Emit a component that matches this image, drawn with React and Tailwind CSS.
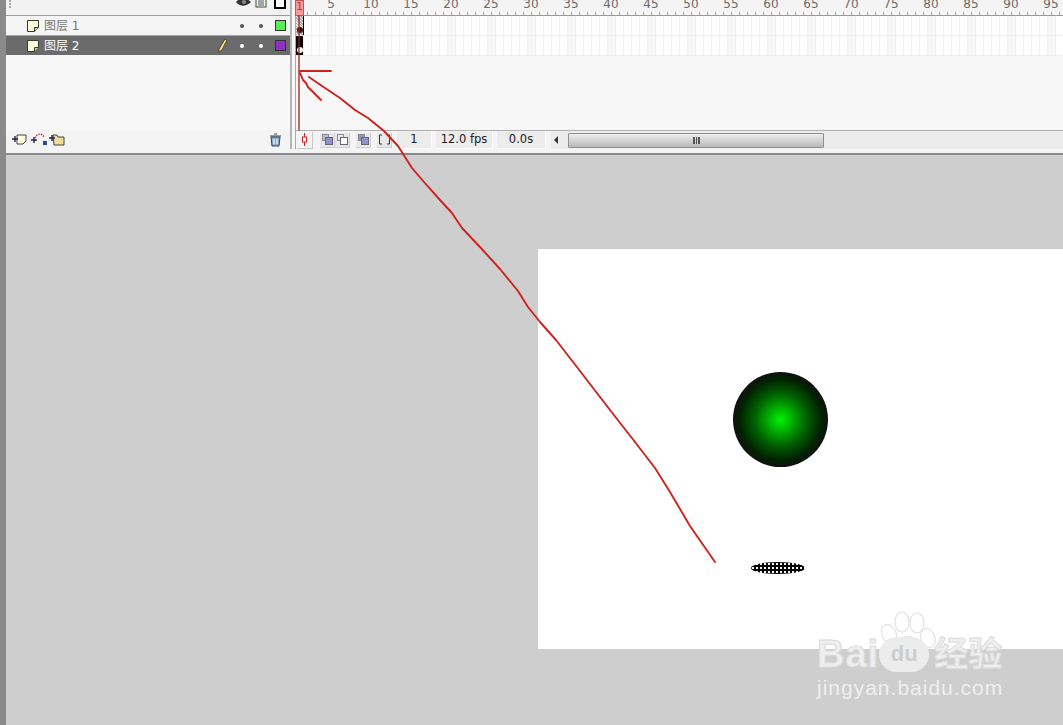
import React from "react";

const frames = Array.from({ length: 100 }, (_, i) => i + 1);

function NoteIcon() {
  return (
    <svg width="14" height="14" viewBox="0 0 14 14">
      <path d="M1.5 1.5h11v7l-4 4h-7z" fill="#fdfbe0" stroke="#3a3a30" strokeWidth="1" />
      <path d="M12.5 8.5h-4v4" fill="#d8d4a8" stroke="#3a3a30" strokeWidth="1" />
    </svg>
  );
}

function FrameCells() {
  return (
    <div className="flex h-[20px] shrink-0">
      {frames.map((n) => (
        <div
          key={n}
          className={`w-[8px] h-full shrink-0 border-r border-b border-[#f0f0f0] ${n % 5 === 0 ? "bg-[#f6f6f6]" : "bg-white"}`}
        />
      ))}
    </div>
  );
}

function Ruler() {
  return (
    <div className="flex h-[16px] border-b border-[#9a9a9a] bg-[#f4f4f4]">
      {frames.map((n) => (
        <div key={n} className="relative w-[8px] h-full shrink-0">
          <div className="absolute left-[3px] bottom-0 w-px h-[3px] bg-[#a8a8a8]" />
          {n % 5 === 0 && (
            <span className="absolute left-[-7px] top-[-3px] w-[20px] text-center text-[12px] leading-[14px] text-[#6a6a6a]">
              {n}
            </span>
          )}
        </div>
      ))}
    </div>
  );
}

function Dot({ light }) {
  return <div className={`w-[4px] h-[4px] rounded-full ${light ? "bg-white" : "bg-[#555]"}`} />;
}

function LayerRow({ name, color, active }) {
  return (
    <div
      className={`flex items-center h-[19px] pl-[20px] pr-[4px] ${active ? "bg-[#6b6b6b] text-white" : "bg-[#f5f5f5] text-[#777]"}`}
    >
      <NoteIcon />
      <span className="ml-[4px] text-[12px]">{name}</span>
      <div className="ml-auto flex items-center">
        {active && (
          <svg width="10" height="15" viewBox="0 0 10 15" className="mr-[12px]">
            <path d="M7 1l2 1-5 10-3 2 0-3z" fill="#f4dc90" stroke="#4a3c18" strokeWidth="0.9" />
          </svg>
        )}
        <Dot light={active} />
        <div className="w-[15px]" />
        <Dot light={active} />
        <div className="w-[12px]" />
        <div className={`w-[11px] h-[11px] border border-[#333] ${color}`} />
      </div>
    </div>
  );
}

function SmallSquares({ back, front }) {
  return (
    <div className="w-[15px] h-[15px] bg-[#e8e8e8] border-r border-b border-[#cfcfcf] flex items-center justify-center">
      <svg width="13" height="13" viewBox="0 0 13 13">
        <rect x="1.5" y="1.5" width="6" height="6" fill={back} stroke="#8a8a9a" />
        <rect x="4.5" y="4.5" width="7" height="7" fill={front} stroke="#667" />
      </svg>
    </div>
  );
}

function InfoBox({ width, children }) {
  return (
    <div className={`${width} h-[18px] shrink-0 flex items-center justify-center bg-[#ececec] border-r border-b border-white text-[11.5px] text-[#222]`}>
      {children}
    </div>
  );
}

function Timeline() {
  return (
    <div className="flex flex-col h-[155px] shrink-0 bg-[#f7f7f7] border-b-2 border-[#8a8a8a]">
      <div className="flex h-[149px] shrink-0">
        {/* layer list */}
        <div className="w-[284px] shrink-0 flex flex-col">
          <div className="h-[16px] flex items-center border-b border-[#9a9a9a] bg-[#f2f2f2] pr-[4px] overflow-hidden">
            <div className="ml-[3px] h-[8px] w-[5px] mt-[-8px] border-l-2 border-dotted border-[#aaa]" />
            <div className="ml-auto flex items-center mt-[-10px]">
              <svg width="15" height="9" viewBox="0 0 15 9" className="mr-[4px]">
                <path d="M0 4c4-5 10-5 15 0-5 5-11 5-15 0z" fill="#333" />
                <circle cx="8" cy="4" r="2" fill="#888" />
              </svg>
              <svg width="12" height="11" viewBox="0 0 12 11" className="mr-[7px]">
                <rect x="1" y="1" width="10" height="9" fill="#fdf8d0" stroke="#444" />
                <path d="M3 4h6M3 6h6M3 8h6" stroke="#3a5a9a" />
              </svg>
              <div className="w-[12px] h-[12px] border-2 border-black bg-white" />
            </div>
          </div>
          <LayerRow name="图层 1" color="bg-[#55f055]" />
          <div className="h-[1px] bg-[#a5a5a5]" />
          <LayerRow name="图层 2" color="bg-[#9030c0]" active />
          <div className="flex-1" />
          <div className="h-[19px] flex items-center pl-[5px] pr-[8px] bg-[#f4f4f4]">
            <svg width="54" height="15" viewBox="0 0 54 15">
              <path d="M6 3h9v6l-3 3H6z" fill="#fdfbe0" stroke="#444" />
              <path d="M1 7h6M4 4v6" stroke="#224" strokeWidth="1.4" />
              <path d="M24 6c2-5 7-5 9-1" fill="none" stroke="#c03030" strokeDasharray="1.5 1" strokeWidth="1.4" />
              <path d="M20 8h6M23 5v6" stroke="#224" strokeWidth="1.4" />
              <rect x="32" y="9" width="4" height="4" fill="#2a4a9a" />
              <path d="M42 3h4l1 2h6v8h-10z" fill="#f0dc9a" stroke="#444" />
              <path d="M38 6h6M41 3v6" stroke="#224" strokeWidth="1.4" />
            </svg>
            <svg width="13" height="14" viewBox="0 0 13 14" className="ml-auto">
              <path d="M2 4h9l-1 9H3z" fill="#8fb0cc" stroke="#345" />
              <path d="M1 3h11M5 1h3" stroke="#345" />
              <path d="M5 6v5M8 6v5" stroke="#fff" />
            </svg>
          </div>
        </div>

        <div className="w-[5px] shrink-0 border-l-2 border-[#b5b5b5]" />

        {/* frames */}
        <div className="flex-1 min-w-0 flex flex-col overflow-hidden border-l border-[#a8a8a8]">
          <Ruler />
          <FrameCells />
          <FrameCells />
          <div className="flex-1" />
          <div className="h-[19px] flex items-center border-t border-[#b0b0b0] bg-[#f4f4f4]">
            <div className="w-[16px] h-[17px] shrink-0 ml-[1px] border-r border-b border-[#c8c8c8] flex items-center justify-center">
              <svg width="7" height="13" viewBox="0 0 7 13">
                <path d="M3.5 0v13" stroke="#c02020" />
                <rect x="1.5" y="4" width="4" height="5" fill="#fff" stroke="#c02020" />
              </svg>
            </div>
            <div className="flex ml-[7px] shrink-0">
              <SmallSquares back="#bdbdc8" front="#8f93c8" />
              <SmallSquares back="#e8e8e8" front="#fff" />
            </div>
            <div className="ml-[6px] shrink-0">
              <SmallSquares back="#8f93c8" front="#8f93c8" />
            </div>
            <div className="ml-[6px] w-[15px] h-[15px] shrink-0 bg-[#e8e8e8] border-r border-b border-[#cfcfcf] flex items-center justify-center">
              <svg width="13" height="13" viewBox="0 0 13 13" fill="none" stroke="#334">
                <path d="M4 2H1.5v9H4M9 2h2.5v9H9" />
              </svg>
            </div>
            <div className="w-[5px] shrink-0" />
            <InfoBox width="w-[35px]">1</InfoBox>
            <div className="w-[4px] shrink-0" />
            <InfoBox width="w-[57px]">12.0 fps</InfoBox>
            <div className="w-[4px] shrink-0" />
            <InfoBox width="w-[49px]">0.0s</InfoBox>
            <div className="w-[5px] shrink-0" />
            {/* scroll bar */}
            <div className="flex-1 min-w-0 h-full flex items-center bg-[#ececec]">
              <span className="ml-[3px] w-0 h-0 border-y-[4px] border-y-transparent border-r-[4px] border-r-[#333]" />
              <div className="ml-[10px] w-[256px] h-[15px] flex items-center justify-center rounded-[1px] border border-[#909090] bg-gradient-to-b from-[#eeeeee] to-[#b8b8b8]">
                <div className="w-[7px] h-[7px] border-x-[2px] border-[#555] flex justify-center">
                  <div className="w-px bg-[#555]" />
                </div>
              </div>
            </div>
          </div>
        </div>
      </div>
      <div className="flex-1 bg-[#f4f4f4]" />
    </div>
  );
}

function Watermark() {
  return (
    <div className="absolute left-[815px] top-[610px] w-[200px] text-[#eeeeee] [font-family:'Liberation_Sans','Noto_Sans_CJK_SC',sans-serif]">
      <svg width="66" height="56" viewBox="0 0 66 56" className="absolute left-[64px] top-0" fill="none" stroke="#e2e2e2" strokeWidth="1.2">
        <ellipse cx="10" cy="24" rx="7" ry="10" transform="rotate(-25 10 24)" />
        <ellipse cx="23" cy="12" rx="7" ry="10" />
        <ellipse cx="38" cy="13" rx="7" ry="10" />
        <ellipse cx="49" cy="28" rx="7" ry="10" transform="rotate(-20 49 28)" />
        <path d="M14 36c6-12 22-14 30 0" />
      </svg>
      <div className="absolute left-[2px] top-[24px] flex items-center">
        <span className="text-[38px] leading-[40px] font-bold tracking-[1px] [-webkit-text-stroke:1px_#dddddd]">Bai</span>
        <span className="w-[50px] h-[35px] flex items-center justify-center rounded-[18px] bg-[#ececec] text-[#cecece] text-[22px] font-bold leading-none">du</span>
        <span className="ml-[5px] text-[34px] leading-[40px] font-bold [-webkit-text-stroke:1px_#dddddd]">经验</span>
      </div>
      <div className="absolute left-[2px] top-[66px] text-[21px] leading-[24px] tracking-[1px] whitespace-nowrap">
        jingyan.baidu.com
      </div>
    </div>
  );
}

function Annotations() {
  return (
    <svg width="1063" height="725" viewBox="0 0 1063 725" className="absolute left-0 top-0 pointer-events-none" fill="none" stroke="#d0211f" strokeWidth="1.9" strokeLinejoin="round" strokeLinecap="round">
      <path d="M299 16v114" stroke="#a81c1c" strokeWidth="1.3" />
      <path d="M300 71h31" />
      <path d="M300 73l3 7 3 3 2 4 5 5 8 8" />
      <path d="M309 77L322 86 340 98 355 110 368 118 384 131 398 146 412 168 424 182 440 200 452 213 462 228 480 247 500 269 518 291 528 307 540 322 556 340 580 371 610 410 635 442 655 468 670 492 690 526 715 562" />
    </svg>
  );
}

export default function App() {
  return (
    <div className="relative w-[1063px] h-[725px] overflow-hidden flex bg-[#cecece] [font-family:'DejaVu_Sans','Noto_Sans_CJK_SC',sans-serif]">
      <div className="w-[6px] shrink-0 bg-[#8a8a8a]" />
      <div className="flex-1 min-w-0 flex flex-col">
        <Timeline />
        {/* stage */}
        <div className="flex-1 pl-[532px] pt-[94px]">
          <div className="relative w-[525px] h-[400px] bg-white">
            <div className="absolute left-[195px] top-[123px] w-[95px] h-[95px] rounded-full bg-[radial-gradient(circle_closest-side,#00f400_0%,#00b000_25%,#006000_55%,#002400_85%,#101010_100%)]" />
            <div className="absolute left-[213px] top-[313px] w-[54px] h-[12px] rounded-[50%] bg-black bg-[radial-gradient(#fff_0.7px,transparent_0.9px)] bg-[length:4px_4px]" />
          </div>
        </div>
      </div>
      {/* playhead + keyframes sit on top of the frame grid */}
      <div className="absolute left-[295px] top-0 w-[9px] h-[16px] bg-[#f99] border border-[#d05050] text-[11px] leading-[12px] text-center text-[#b04040]">1</div>
      <div className="absolute left-[296px] top-[16px] w-[8px] h-[19px] bg-[repeating-linear-gradient(45deg,#aaa_0,#aaa_1px,#f4f4f4_1px,#f4f4f4_2px)] border-r border-black flex items-end justify-center pb-[2px]">
        <div className="w-[6px] h-[6px] rounded-full bg-[#3a0a0a]" />
      </div>
      <div className="absolute left-[296px] top-[36px] w-[7px] h-[19px] bg-black flex items-end justify-center pb-[2px]">
        <div className="w-[6px] h-[6px] rounded-full bg-white" />
      </div>
      <Annotations />
      <Watermark />
    </div>
  );
}
